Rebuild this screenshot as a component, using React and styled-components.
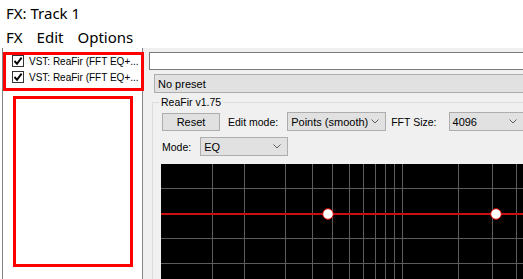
import React from 'react'
import styled, { createGlobalStyle } from 'styled-components'

const GlobalStyle = createGlobalStyle`
  html, body {
    margin: 0;
    padding: 0;
    overflow: hidden;
    background: #ffffff;
  }
  #root {
    width: 523px;
    height: 279px;
    overflow: hidden;
  }
`

const Window = styled.div`
  width: 600px;
  height: 279px;
  display: flex;
  flex-direction: column;
  background: #ffffff;
  font-family: "Liberation Sans", Arial, sans-serif;
  font-size: 10.5px;
  color: #000;
`

const TitleBar = styled.div`
  height: 26px;
  flex-shrink: 0;
  padding-left: 6px;
  display: flex;
  align-items: center;
  font-family: "Noto Sans", "Open Sans", sans-serif;
  font-size: 15px;
  color: #000;
`

const MenuBar = styled.div`
  height: 22px;
  flex-shrink: 0;
  padding-left: 6px;
  display: flex;
  align-items: center;
  gap: 14px;
  font-family: "Noto Sans", "Open Sans", sans-serif;
  font-size: 15px;
`

const MenuItem = styled.span`
  line-height: 22px;
`

const Body = styled.div`
  flex: 1;
  display: flex;
  min-height: 0;
  overflow: hidden;
  background: #f0f0f0;
`

const LeftPane = styled.div`
  width: 141px;
  flex-shrink: 0;
  padding-left: 2px;
  background: #ffffff;
  display: flex;
`

const List = styled.div`
  flex: 1;
  border-left: 1px solid #838383;
  border-right: 1px solid #838383;
  display: flex;
  flex-direction: column;
`

const Highlight = styled.div`
  border: 3px solid #ff0000;
  box-sizing: border-box;
  flex-shrink: 0;
  width: ${p => p.$w}px;
  height: ${p => p.$h}px;
  margin-top: ${p => p.$mt}px;
  margin-left: ${p => p.$ml || 0}px;
  margin-right: ${p => p.$mr || 0}px;
  display: flex;
  flex-direction: column;
  gap: 4px;
`

const FxRow = styled.div`
  height: 12px;
  display: flex;
  align-items: center;
  padding-left: 6px;
  white-space: nowrap;
  font-size: 10px;
`

const CheckBox = styled.span`
  width: 12px;
  height: 12px;
  box-sizing: border-box;
  border: 1px solid #333;
  background: #fff;
  display: inline-flex;
  align-items: center;
  justify-content: center;
  margin-right: 5px;
  flex-shrink: 0;
`

const RightPane = styled.div`
  flex: 1;
  display: flex;
  flex-direction: column;
  padding-left: 6px;
  & > * {
    flex-shrink: 0;
  }
`

const NameInput = styled.div`
  height: 18px;
  margin-top: 4px;
  box-sizing: border-box;
  border: 1px solid #7a7a7a;
  background: #ffffff;
`

const PresetBar = styled.div`
  height: 19px;
  margin-top: 4px;
  margin-left: 5px;
  box-sizing: border-box;
  border: 1px solid #adadad;
  background: #e1e1e1;
  display: flex;
  align-items: center;
  padding-left: 3px;
  font-size: 11px;
`

const Group = styled.fieldset`
  margin: 3px 0 0 3px;
  padding: 4px 0 0 8px;
  border: 1px solid #dcdcdc;
  border-right: none;
  border-bottom: none;
  min-width: 0;
  display: flex;
  flex-direction: column;
  & > * {
    flex-shrink: 0;
  }
`

const Legend = styled.legend`
  padding: 0 2px;
  margin-left: -2px;
  line-height: 12px;
  font-size: 10.5px;
`

const ControlRow = styled.div`
  display: flex;
  align-items: center;
  height: 19px;
  padding-left: 1px;
  margin-top: ${p => p.$mt || 0}px;
`

const Button = styled.div`
  width: 58px;
  height: 18px;
  box-sizing: border-box;
  border: 1px solid #adadad;
  background: #e1e1e1;
  display: flex;
  align-items: center;
  justify-content: center;
  font-size: 11px;
`

const Label = styled.span`
  margin-left: ${p => p.$ml || 0}px;
  white-space: nowrap;
`

const Select = styled.div`
  width: ${p => p.$w}px;
  height: 19px;
  margin-left: ${p => p.$ml || 0}px;
  box-sizing: border-box;
  border: 1px solid #adadad;
  background: #e1e1e1;
  display: flex;
  align-items: center;
  justify-content: space-between;
  padding: 0 6px 0 3px;
  font-size: 11px;
  white-space: nowrap;
`

const Display = styled.div`
  margin-top: 8px;
  height: 130px;
  background: #000;
  display: flex;
`

const Chevron = () => (
  <svg width="8" height="5" viewBox="0 0 8 5">
    <path d="M0.5 0.5 L4 4 L7.5 0.5" fill="none" stroke="#606060" strokeWidth="1" />
  </svg>
)

const Check = () => (
  <svg width="10" height="10" viewBox="0 0 10 10">
    <path d="M1.5 5 L4 7.8 L8.6 1.6" fill="none" stroke="#000" strokeWidth="1.9" />
  </svg>
)

const gridX = [51, 83, 124, 151, 171, 188, 202, 214, 224, 233, 241, 297, 331, 355]
const gridY = [24, 74, 99, 124]
const points = [167, 335]

const EqGraph = () => (
  <svg width="440" height="130" viewBox="0 0 440 130">
    {gridY.map(y => (
      <rect key={'h' + y} x="0" y={y} width="440" height="1" fill="#5c5c5c" />
    ))}
    {gridX.map(x => (
      <rect key={'v' + x} x={x} y="0" width="1" height="130" fill="#5c5c5c" />
    ))}
    <rect x="0" y="49" width="440" height="2" fill="#c81010" />
    {points.map(x => (
      <circle key={'p' + x} cx={x} cy="50" r="5.3" fill="#fff" stroke="#e00000" strokeWidth="1" />
    ))}
  </svg>
)

const fxNames = ['VST: ReaFir (FFT EQ+...', 'VST: ReaFir (FFT EQ+...']

export default function App() {
  return (
    <>
      <GlobalStyle />
      <Window>
        <TitleBar>FX: Track 1</TitleBar>
        <MenuBar>
          <MenuItem>FX</MenuItem>
          <MenuItem>Edit</MenuItem>
          <MenuItem>Options</MenuItem>
        </MenuBar>
        <Body>
          <LeftPane>
            <List>
              <Highlight $w={141} $h={39} $mt={4} $mr={-2}>
                {fxNames.map((name, i) => (
                  <FxRow key={'fx-' + i}>
                    <CheckBox><Check /></CheckBox>
                    {name}
                  </FxRow>
                ))}
              </Highlight>
              <Highlight $w={120} $h={171} $mt={5} $ml={10} />
            </List>
          </LeftPane>
          <RightPane>
            <NameInput />
            <PresetBar>No preset</PresetBar>
            <Group>
              <Legend>ReaFir v1.75</Legend>
              <ControlRow>
                <Button>Reset</Button>
                <Label $ml={8}>Edit mode:</Label>
                <Select $w={99} $ml={9}>Points (smooth) <Chevron /></Select>
                <Label $ml={5}>FFT Size:</Label>
                <Select $w={75} $ml={12}>4096 <Chevron /></Select>
              </ControlRow>
              <ControlRow $mt={6}>
                <Label>Mode:</Label>
                <Select $w={88} $ml={9}>EQ <Chevron /></Select>
              </ControlRow>
              <Display>
                <EqGraph />
              </Display>
            </Group>
          </RightPane>
        </Body>
      </Window>
    </>
  )
}
